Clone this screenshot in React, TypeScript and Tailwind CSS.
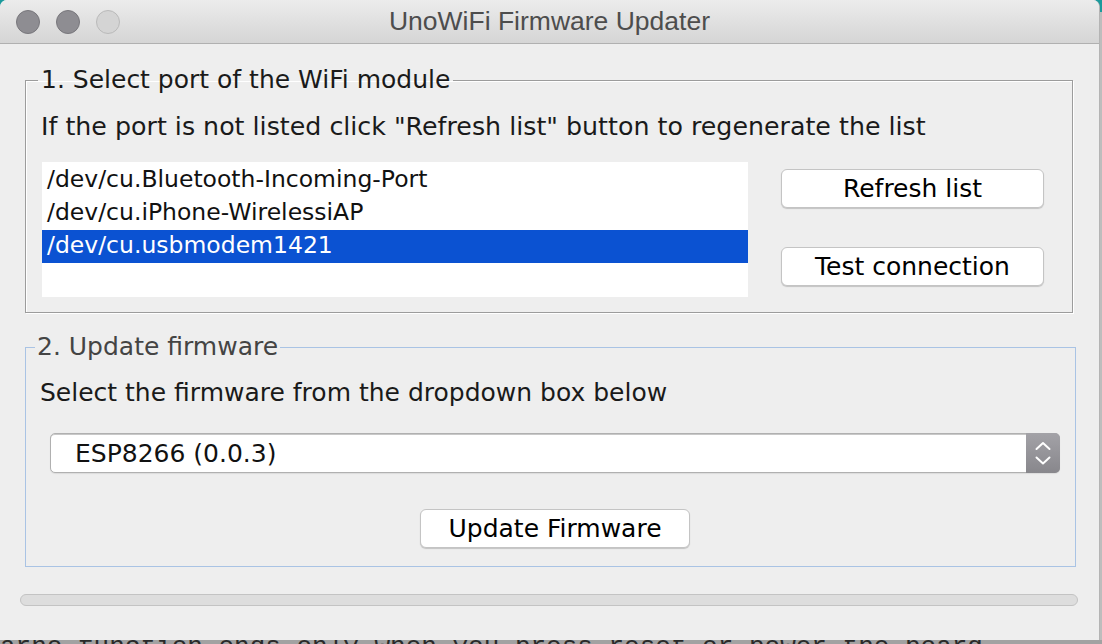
import { useState } from 'react'

const ports = ['/dev/cu.Bluetooth-Incoming-Port', '/dev/cu.iPhone-WirelessiAP', '/dev/cu.usbmodem1421']

function Btn({ label, className = '' }: { label: string; className?: string }) {
  return (
    <button className={`h-[39px] bg-white border border-[#c4c4c4] rounded-[6px] shadow-[0_1px_1px_rgba(0,0,0,0.18)] text-[25px] leading-none text-black ${className}`}>
      {label}
    </button>
  )
}

export default function App() {
  const [sel, setSel] = useState(2)
  return (
    <div className="w-[1102px] h-[644px] overflow-hidden bg-[linear-gradient(to_bottom,#1b9a9c_0px,#1b9a9c_12px,#bdbdbd_12px)] font-['DejaVu_Sans',sans-serif]">
      <div className="w-[1100px] h-[640px] rounded-t-[7px] overflow-hidden bg-[#eeeeee] border-r border-[#b4b4b4] flex flex-col">
        {/* title bar */}
        <div className="h-[44px] shrink-0 grid grid-cols-[1fr_auto_1fr] items-center bg-gradient-to-b from-[#ececec] to-[#d5d5d5] border-b border-[#b0b0b0]">
          <div className="flex items-center gap-[16px] pl-[16px]">
            <span className="w-[24px] h-[24px] rounded-full bg-[#8e8d92] border border-[#78777c]" />
            <span className="w-[24px] h-[24px] rounded-full bg-[#8e8d92] border border-[#78777c]" />
            <span className="w-[24px] h-[24px] rounded-full bg-[#d4d4d4] border border-[#bababa]" />
          </div>
          <div className="font-['Liberation_Sans',sans-serif] text-[26.5px] leading-none text-[#4d4d4d]">UnoWiFi Firmware Updater</div>
          <div />
        </div>

        {/* group 1 */}
        <fieldset className="ml-[25px] mt-[21px] w-[1048px] border border-[#9c9c9c] shadow-[inset_1px_1px_0_#fff,1px_1px_0_#fff]">
          <legend className="ml-[12px] px-[3px] text-[25px] leading-[30px] text-[#1a1a1a]">1. Select port of the WiFi module</legend>
          <div className="pt-[17px] pl-[15px] pr-[27px] pb-[15px]">
            <div className="text-[25.3px] leading-[30px] text-[#1a1a1a]">If the port is not listed click "Refresh list" button to regenerate the list</div>
            <div className="mt-[20px] flex gap-[33px]">
              <div className="w-[706px] h-[135px] bg-white pt-[2px] ml-[1px]">
                {ports.map((p, i) => (
                  <div key={p} onClick={() => setSel(i)}
                    className={`h-[33px] pl-[5px] text-[23.5px] leading-[31px] ${sel === i ? 'bg-[#0b52d2] text-white' : 'text-[#111]'}`}>
                    {p}
                  </div>
                ))}
              </div>
              <div className="pt-[7px] flex flex-col gap-[39px]">
                <Btn label="Refresh list" className="w-[263px]" />
                <Btn label="Test connection" className="w-[263px]" />
              </div>
            </div>
          </div>
        </fieldset>

        {/* group 2 */}
        <fieldset className="ml-[25px] mt-[19px] w-[1051px] border border-[#a9c3e4]">
          <legend className="ml-[9px] px-[2px] text-[25px] leading-[30px] text-[#444]">2. Update firmware</legend>
          <div className="pt-[16px] pb-[18px] flex flex-col">
            <div className="pl-[14px] text-[25px] leading-[30px] text-[#1a1a1a]">Select the firmware from the dropdown box below</div>
            <div className="mt-[25px] ml-[24px] mr-[15px] h-[40px] flex bg-white border border-[#b0b0b0] rounded-[5px] shadow-[inset_0_1px_0_#c8c8c8,0_1px_1px_rgba(0,0,0,0.08)]">
              <div className="flex-1 flex items-center pl-[24px] text-[25px] leading-none text-[#111]">ESP8266 (0.0.3)</div>
              <div className="w-[34px] -my-px -mr-px flex items-center justify-center rounded-r-[5px] bg-gradient-to-b from-[#a3a2a7] to-[#88878c]">
                <svg width="16" height="25" viewBox="0 0 16 25" fill="none" stroke="#fff" strokeWidth="2" strokeLinecap="round" strokeLinejoin="round">
                  <path d="M1.5 8 L8 2 L14.5 8" />
                  <path d="M1.5 16.5 L8 22.5 L14.5 16.5" />
                </svg>
              </div>
            </div>
            <Btn label="Update Firmware" className="mt-[36px] ml-[394px] w-[270px] h-[38px] self-start" />
          </div>
        </fieldset>

        {/* progress */}
        <div className="mt-[27px] ml-[20px] w-[1058px] h-[12px] rounded-full bg-[#dddddd] border border-[#c3c3c3]" />
      </div>
      <div className="h-[4px] w-[1102px] overflow-hidden bg-[#a2a2a2]">
        <div className="-mt-[6px] whitespace-nowrap font-['Liberation_Mono',monospace] text-[26px] leading-[26px] text-[#2a2a2a]">arno_function ends only when you press reset or power the board</div>
      </div>
    </div>
  )
}
